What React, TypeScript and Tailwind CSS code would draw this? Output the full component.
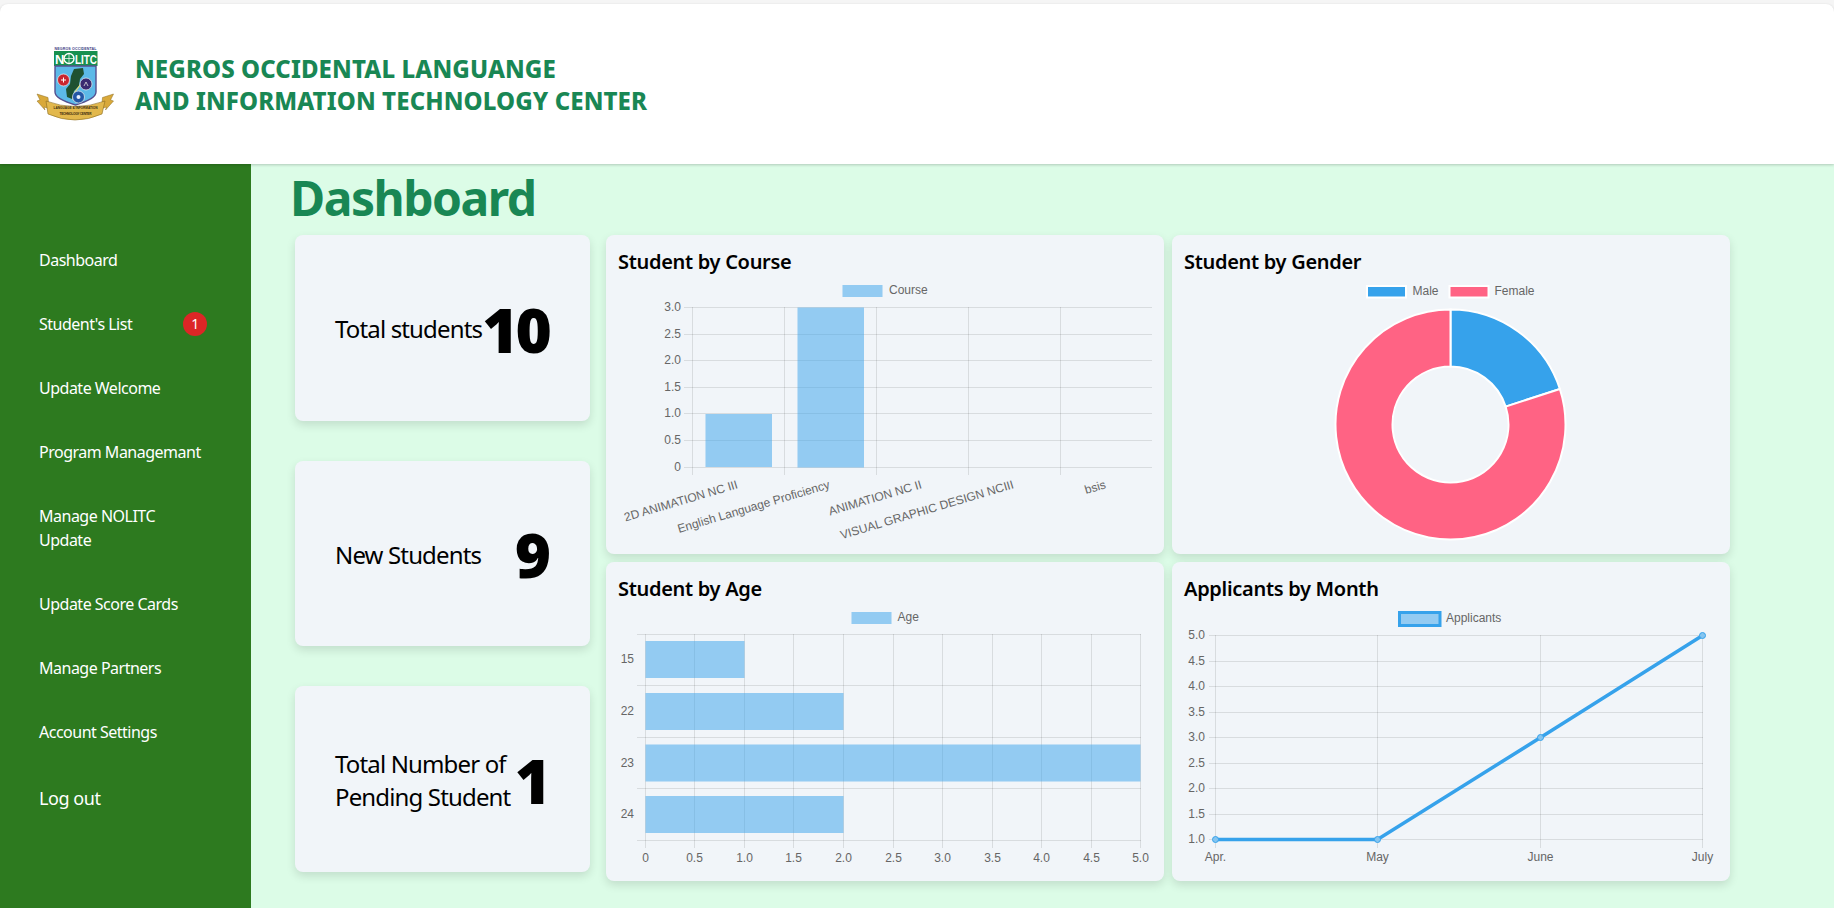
const CHART_FONT = "'Liberation Sans', Arial, sans-serif";

const navItems = [
  { label: "Dashboard", h: "h-16" },
  { label: "Student's List", h: "h-16", badge: 1 },
  { label: "Update Welcome", h: "h-16" },
  { label: "Program Managemant", h: "h-16" },
  { label: "Manage NOLITC Update", h: "h-[88px]" },
  { label: "Update Score Cards", h: "h-16" },
  { label: "Manage Partners", h: "h-16" },
  { label: "Account Settings", h: "h-16" },
];

function Logo() {
  return (
    <svg viewBox="36 44 78 77" width={78} height={77} className="-mt-[2px] shrink-0">
      <text x={75.5} y={48.6} fontSize={3.6} fontWeight={700} textAnchor="middle" fill="#3d3d85" textLength={42} fontFamily={CHART_FONT}>
        NEGROS OCCIDENTAL
      </text>
      <rect x={54} y={50} width={43.5} height={15} fill="#17904f" />
      <text x={55} y={63} fontSize={13} fontWeight={700} fill="#fff" fontFamily={CHART_FONT}>N</text>
      <circle cx={69} cy={57.5} r={5} fill="none" stroke="#fff" strokeWidth={1.4} />
      <path d="M64 57.5h10M69 52.5v10" stroke="#fff" strokeWidth={0.7} />
      <text x={75} y={63} fontSize={12} fontWeight={700} fill="#fff" textLength={22} lengthAdjust="spacingAndGlyphs" fontFamily={CHART_FONT}>LITC</text>
      <path d="M55 65h41v26q0 7-20.500 13q-20.500-6-20.500-13z" fill="#5cb9e8" stroke="#55508f" strokeWidth={1.4} />
      <path d="M74 68l9-1 1 6-4 5-1 7-5 5-2 8-5-2-1-8 4-5 1-8z" fill="#1f5231" />
      <path d="M83 80l-8 11-2 8" fill="none" stroke="#e9dc6e" strokeWidth={1.2} />
      <circle cx={63.500} cy={79} r={6} fill="#c9252f" stroke="#eee" strokeWidth={0.7} />
      <path d="M61 79h5M63.500 76.500v5" stroke="#fff" strokeWidth={1} />
      <circle cx={86} cy={83} r={6} fill="#3a2a70" stroke="#eee" strokeWidth={0.7} />
      <path d="M84 85l2-4 2 4" fill="none" stroke="#ddd" strokeWidth={0.8} />
      <circle cx={78.500} cy={96} r={6} fill="#2456a6" stroke="#eee" strokeWidth={0.7} />
      <circle cx={78.500} cy={96} r={2} fill="#e8f0ff" />
      <path d="M37 93l11 3.500 1 11-5-1.500 1 3-8-9 3-1z" fill="#d9a93a" stroke="#8c6c1e" strokeWidth={0.5} />
      <path d="M113.500 93l-11 3.500-1 11 5-1.500-1 3 8-9-3-1z" fill="#d9a93a" stroke="#8c6c1e" strokeWidth={0.5} />
      <path d="M46 100Q75 111 105 100L102 113Q75 125 48 113z" fill="#e2b84c" stroke="#8c6c1e" strokeWidth={0.6} />
      <text x={75.500} y={108.300} fontSize={3.200} fontWeight={700} textAnchor="middle" fill="#3b2c10" textLength={44} fontFamily={CHART_FONT}>
        LANGUAGE &amp; INFORMATION
      </text>
      <text x={75.500} y={113.500} fontSize={3.200} fontWeight={700} textAnchor="middle" fill="#3b2c10" textLength={32} fontFamily={CHART_FONT}>
        TECHNOLOGY CENTER
      </text>
    </svg>
  );
}

function GridLines({ xs, ys, x0, x1, y0, y1 }: { xs: number[]; ys: number[]; x0: number; x1: number; y0: number; y1: number }) {
  return (
    <g stroke="rgba(0,0,0,0.1)" strokeWidth={1}>
      {xs.map((x) => (
        <line key={x} x1={x} x2={x} y1={y0} y2={y1} />
      ))}
      {ys.map((y) => (
        <line key={y} x1={x0} x2={x1} y1={y} y2={y} />
      ))}
    </g>
  );
}

function LegendBox({ x, y, w = 40, h = 12, label, tx, ty }: { x: number; y: number; w?: number; h?: number; label: string; tx: number; ty: number }) {
  return (
    <g>
      <rect x={x} y={y} width={w} height={h} fill="rgba(54,162,235,0.5)" />
      <text x={tx} y={ty} fontSize={12} fill="#666">{label}</text>
    </g>
  );
}

function CourseChart() {
  const ys = [307.5, 334.5, 360.5, 387.5, 413.5, 440.5, 467.5];
  const yLabels = ["3.0", "2.5", "2.0", "1.5", "1.0", "0.5", "0"];
  const xs = [692.5, 784.5, 876.5, 968.5, 1060.5];
  const labels = ["2D ANIMATION NC III", "English Language Proficiency", "ANIMATION NC II", "VISUAL GRAPHIC DESIGN NCIII", "bsis"];
  return (
    <svg viewBox="606 275 558 279" width={558} height={279} className="block" fontFamily={CHART_FONT}>
      <LegendBox x={842.5} y={285} label="Course" tx={889} ty={294} />
      <GridLines xs={xs} ys={ys} x0={684} x1={1152} y0={307} y1={475} />
      <rect x={705.5} y={414} width={66.500} height={53} fill="rgba(54,162,235,0.5)" />
      <rect x={797.5} y={307.5} width={66.500} height={160} fill="rgba(54,162,235,0.5)" />
      {yLabels.map((t, i) => (
        <text key={t} x={681} y={ys[i] + 3} fontSize={12} fill="#666" textAnchor="end">{t}</text>
      ))}
      {labels.map((t, i) => (
        <text key={t} fontSize={12} fill="#666" textAnchor="end" transform={`translate(${738.5 + i * 92} 488) rotate(-16.5)`}>{t}</text>
      ))}
    </svg>
  );
}

function GenderChart() {
  const cx = 1450.5;
  const cy = 424.5;
  const R = 115;
  const r = 58;
  const a = (72 * Math.PI) / 180;
  const sx = cx + R * Math.sin(a);
  const sy = cy - R * Math.cos(a);
  const ix = cx + r * Math.sin(a);
  const iy = cy - r * Math.cos(a);
  return (
    <svg viewBox="1172 275 558 279" width={558} height={279} className="block" fontFamily={CHART_FONT}>
      <rect x={1367} y={286} width={39} height={11.500} fill="#36a2eb" stroke="#fff" strokeWidth={2} />
      <text x={1412.5} y={295} fontSize={12} fill="#666">Male</text>
      <rect x={1449.5} y={286} width={39} height={11.500} fill="#ff6384" stroke="#fff" strokeWidth={2} />
      <text x={1494.5} y={295} fontSize={12} fill="#666">Female</text>
      <path
        d={`M${cx} ${cy - R}A${R} ${R} 0 0 1 ${sx} ${sy}L${ix} ${iy}A${r} ${r} 0 0 0 ${cx} ${cy - r}Z`}
        fill="#36a2eb"
        stroke="#fff"
        strokeWidth={2}
      />
      <path
        d={`M${sx} ${sy}A${R} ${R} 0 1 1 ${cx} ${cy - R}L${cx} ${cy - r}A${r} ${r} 0 1 0 ${ix} ${iy}Z`}
        fill="#ff6384"
        stroke="#fff"
        strokeWidth={2}
      />
    </svg>
  );
}

function AgeChart() {
  const xs = [645.5, 694.5, 744.5, 793.5, 843.5, 893.5, 942.5, 992.5, 1041.5, 1091.5, 1140.5];
  const ys = [634.5, 685.5, 737.5, 788.5, 840.5];
  const xLabels = ["0", "0.5", "1.0", "1.5", "2.0", "2.5", "3.0", "3.5", "4.0", "4.5", "5.0"];
  const bars = [
    { label: "15", y: 641, w: 99 },
    { label: "22", y: 693, w: 198 },
    { label: "23", y: 744.5, w: 495 },
    { label: "24", y: 796, w: 198 },
  ];
  return (
    <svg viewBox="606 602 558 279" width={558} height={279} className="block" fontFamily={CHART_FONT}>
      <LegendBox x={851.5} y={612} label="Age" tx={897.5} ty={621} />
      <GridLines xs={xs} ys={ys} x0={637} x1={1141} y0={634} y1={848} />
      {bars.map((b) => (
        <g key={b.label}>
          <rect x={645.5} y={b.y} width={b.w} height={37} fill="rgba(54,162,235,0.5)" />
          <text x={634} y={b.y + 22} fontSize={12} fill="#666" textAnchor="end">{b.label}</text>
        </g>
      ))}
      {xLabels.map((t, i) => (
        <text key={t} x={xs[i]} y={862} fontSize={12} fill="#666" textAnchor="middle">{t}</text>
      ))}
    </svg>
  );
}

function ApplicantsChart() {
  const xs = [1215.5, 1377.5, 1540.5, 1702.5];
  const ys = [635.5, 661.5, 686.5, 712.5, 737.5, 763.5, 788.5, 814.5, 839.5];
  const yLabels = ["5.0", "4.5", "4.0", "3.5", "3.0", "2.5", "2.0", "1.5", "1.0"];
  const months = ["Apr.", "May", "June", "July"];
  const pts = [
    [1215.5, 839.5],
    [1377.5, 839.5],
    [1540.5, 737.5],
    [1702.5, 635.5],
  ];
  return (
    <svg viewBox="1172 602 558 279" width={558} height={279} className="block" fontFamily={CHART_FONT}>
      <rect x={1399.5} y={612.500} width={40.500} height={13} fill="rgba(54,162,235,0.5)" stroke="#36a2eb" strokeWidth={3} />
      <text x={1446} y={621.500} fontSize={12} fill="#666">Applicants</text>
      <GridLines xs={xs} ys={ys} x0={1209} x1={1703} y0={635} y1={848} />
      {yLabels.map((t, i) => (
        <text key={t} x={1205} y={ys[i] + 3} fontSize={12} fill="#666" textAnchor="end">{t}</text>
      ))}
      {months.map((t, i) => (
        <text key={t} x={xs[i]} y={861} fontSize={12} fill="#666" textAnchor="middle">{t}</text>
      ))}
      <polyline points={pts.map((p) => p.join(",")).join(" ")} fill="none" stroke="#36a2eb" strokeWidth={3.5} />
      {pts.map((p) => (
        <circle key={p[0]} cx={p[0]} cy={p[1]} r={3} fill="#85c5f0" stroke="#36a2eb" strokeWidth={1} />
      ))}
    </svg>
  );
}

function StatCard({ label, value }: { label: React.ReactNode; value: string }) {
  return (
    <div className="flex h-[185.6px] items-center justify-between rounded-lg bg-[#f1f5f9] pr-[42px] pl-10 shadow-[0_4px_10px_rgba(0,0,0,0.12)]">
      <div className="pt-0.5 text-2xl leading-[33px] tracking-[-0.85px] whitespace-nowrap text-black">{label}</div>
      <div className="pt-0.5 text-[62px] leading-none font-black tracking-[-3px] text-black">{value}</div>
    </div>
  );
}

function ChartCard({ title, children }: { title: string; children: React.ReactNode }) {
  return (
    <div className="h-[319px] overflow-hidden rounded-lg bg-[#f1f5f9] shadow-[0_4px_10px_rgba(0,0,0,0.12)]">
      <h2 className="h-10 pt-[13px] pl-3 text-xl leading-7 font-semibold tracking-[-0.3px] text-black">{title}</h2>
      {children}
    </div>
  );
}

export default function App() {
  return (
    <div className="flex h-screen flex-col overflow-hidden bg-[#f5f5f5] pt-1 font-['Noto_Sans',sans-serif]">
      <header className="z-10 flex h-40 shrink-0 items-center gap-[21px] rounded-t-lg bg-white pl-[36px] shadow-[0_1px_3px_rgba(0,0,0,0.2)]">
        <Logo />
        <div className="pt-0.5 text-2xl leading-8 font-extrabold tracking-[0.1px] text-[#198754]">
          <div>NEGROS OCCIDENTAL LANGUANGE</div>
          <div>AND INFORMATION TECHNOLOGY CENTER</div>
        </div>
      </header>
      <div className="flex min-h-0 flex-1">
        <aside className="w-[251px] shrink-0 bg-[#2d7a1f] pt-[64px] pl-[39px] text-white">
          {navItems.map((item) => (
            <div key={item.label} className={`flex ${item.h} w-[168px] items-center justify-between tracking-[-0.5px]`}>
              <span className="leading-6">{item.label}</span>
              {item.badge && (
                <span className="flex size-6 items-center justify-center rounded-full bg-[#dc2626] text-sm">{item.badge}</span>
              )}
            </div>
          ))}
          <div className="mt-[2px] text-lg leading-[64px] tracking-[-0.45px]">Log out</div>
        </aside>
        <main className="min-w-0 flex-1 bg-[#dcfce7] pl-[39px]">
          <h1 className="h-[67px] pt-[3px] text-5xl leading-[62px] font-bold tracking-[-1.5px] text-[#198754]">Dashboard</h1>
          <div className="ml-[5px] flex gap-4 pt-[4px]">
            <div className="flex w-[295px] flex-col gap-10">
              <StatCard label="Total students" value="10" />
              <StatCard label="New Students" value="9" />
              <StatCard
                label={
                  <>
                    Total Number of
                    <br />
                    Pending Student
                  </>
                }
                value="1"
              />
            </div>
            <div className="grid grid-cols-[558px_558px] gap-2">
              <ChartCard title="Student by Course"><CourseChart /></ChartCard>
              <ChartCard title="Student by Gender"><GenderChart /></ChartCard>
              <ChartCard title="Student by Age"><AgeChart /></ChartCard>
              <ChartCard title="Applicants by Month"><ApplicantsChart /></ChartCard>
            </div>
          </div>
        </main>
      </div>
    </div>
  );
}
